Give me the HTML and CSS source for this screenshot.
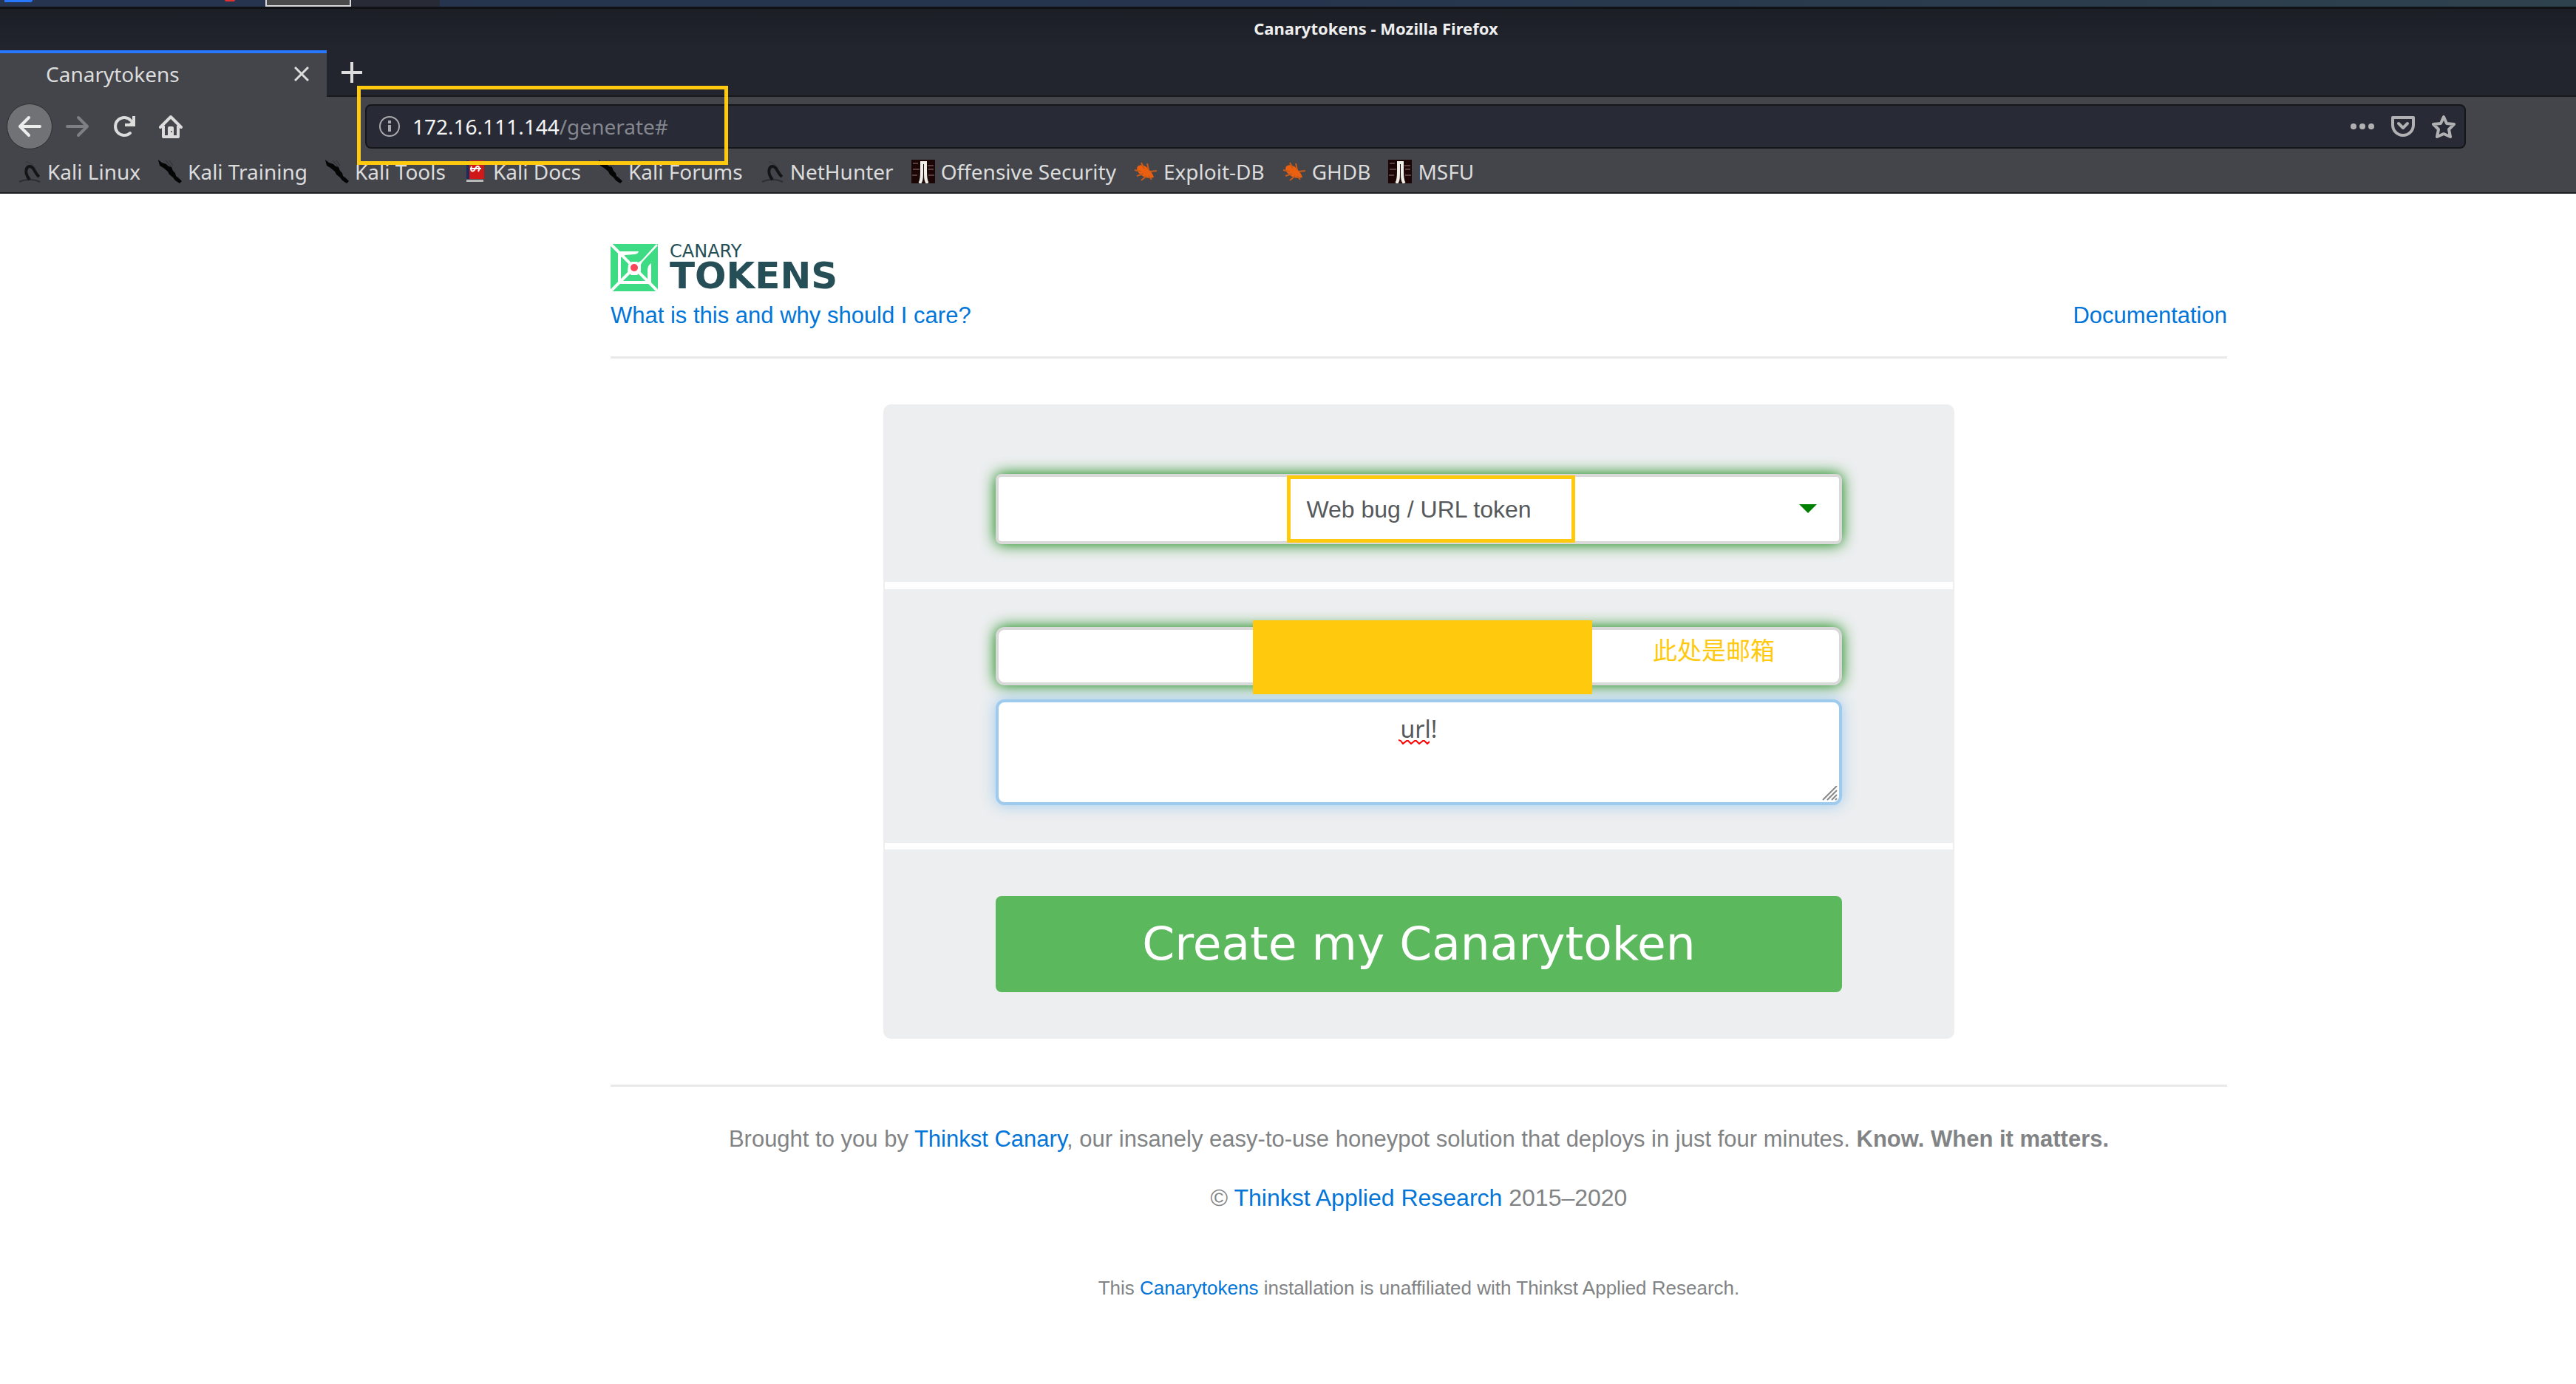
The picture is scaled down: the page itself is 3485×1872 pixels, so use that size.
FILE: index.html
```html
<!DOCTYPE html>
<html lang="en">
<head>
<meta charset="utf-8">
<title>Canarytokens</title>
<link rel="stylesheet" href="styles.css">
</head>
<body>
<svg class="sprite" aria-hidden="true">
  <symbol id="dragon" viewBox="0 0 32 32">
    <path d="M2 30c8-4 20-4 28 0" fill="none" stroke="#2c2e32" stroke-width="2"/>
    <path d="M16 27c-4-5-6-10-4-15 2-4 6-4 9 0 2 3 4 8 8 11" fill="none" stroke="#141517" stroke-width="4"/>
    <path d="M11 3c6 1 10 4 13 9" fill="none" stroke="#34363a" stroke-width="1"/>
  </symbol>
  <symbol id="slash" viewBox="0 0 32 32">
    <path d="M0 0l5 4 6 2 3 3 4 1 2 5 3 3 1 4 4 3 4 4-3 3-6-4-3-4-5-4-2-4-6-5-5-3z" fill="#050505"/>
    <path d="M10 1l8 9M15 1l5 7" stroke="#2c2d31" stroke-width="1"/>
  </symbol>
  <symbol id="docs" viewBox="0 0 32 32">
    <path d="M4 1h24v25H4z" fill="#d01818"/><path d="M4 1h4v25H4z" fill="#1c2a5c"/><path d="M4 27h23v3H4z" fill="#b9b9b9"/>
    <path d="M11 9c-3 8 3 8 5 3 2-5 8-4 4 4M9 12h15" fill="none" stroke="#fff" stroke-width="2"/>
  </symbol>
  <symbol id="offsec" viewBox="0 0 32 32">
    <path d="M0 0h32v32H0z" fill="#1c0505"/>
    <path d="M2 5h7M2 13h9M1 21h7M22 8h8M23 13h7M23 21h8" stroke="#5c3d3d" stroke-width="2"/>
    <path d="M11 32c3-3 3-8 3-17V4h5v11c0 9 0 14 3 17" fill="none" stroke="#f0eee8" stroke-width="4"/>
  </symbol>
  <symbol id="spider" viewBox="0 0 32 32">
    <path d="M5 9c6-4 12 0 16 5 3 3 5 6 6 10-7 2-14 0-18-4-4-3-6-7-4-11z" fill="#ea6010"/>
    <path d="M1 14l9 2M4 22l9-3M10 28l7-6M10 4l4 8M18 5l2 9M31 15l-9 1M24 27l-4-5" stroke="#c85a1a" stroke-width="2"/>
  </symbol>
</svg>

<header class="browser">
  <div class="desktop">
    <span class="desk-logo"></span><span class="desk-dot"></span><span class="desk-task"></span><span class="desk-rest"></span>
  </div>
  <div class="titlebar">Canarytokens - Mozilla Firefox</div>
  <div class="tabs">
    <div class="tab">
      <span class="tab-name">Canarytokens</span>
      <button class="icon-btn" aria-label="Close tab"><svg width="20" height="20" viewBox="0 0 20 20"><path d="M1 1l18 18M19 1L1 19" stroke="#dcdcdc" stroke-width="3" fill="none"/></svg></button>
    </div>
    <button class="icon-btn new-tab" aria-label="New tab"><svg width="28" height="28" viewBox="0 0 28 28"><path d="M14 0v28M0 14h28" stroke="#dcdcdc" stroke-width="4" fill="none"/></svg></button>
  </div>
  <nav class="navbar">
    <button class="icon-btn back" aria-label="Back"><svg width="32" height="32" viewBox="0 0 32 32"><path d="M30 16H3M15 4L3 16l12 12" stroke="#ededed" stroke-width="4" fill="none" stroke-linecap="round" stroke-linejoin="round"/></svg></button>
    <button class="icon-btn" aria-label="Forward"><svg width="32" height="32" viewBox="0 0 32 32"><path d="M2 16h27M17 4l12 12-12 12" stroke="#7d7f84" stroke-width="4" fill="none" stroke-linecap="round" stroke-linejoin="round"/></svg></button>
    <button class="icon-btn" aria-label="Reload"><svg width="32" height="32" viewBox="0 0 32 32"><path d="M24 25a12 12 0 1 1 1-17" stroke="#dcdcdc" stroke-width="4" fill="none" stroke-linecap="round"/><path d="M31 2v14H17v-4h6l4-4V2z" fill="#dcdcdc"/></svg></button>
    <button class="icon-btn" aria-label="Home"><svg width="32" height="32" viewBox="0 0 32 32"><path d="M2 17L16 3l14 14" stroke="#dcdcdc" stroke-width="4" fill="none" stroke-linecap="round" stroke-linejoin="round"/><path d="M6 15v15h20V15" fill="none" stroke="#dcdcdc" stroke-width="4" stroke-linejoin="round"/><path d="M12 18q0-2 2-2h4q2 0 2 2v12h-8z" fill="#dcdcdc"/><circle cx="17" cy="23" r="1" fill="#43454b"/></svg></button>
    <div class="urlbar">
      <svg width="28" height="28" viewBox="0 0 28 28"><circle cx="14" cy="14" r="13" stroke="#a8a9ad" stroke-width="2" fill="none"/><path d="M14 12v9M14 6v4" stroke="#a8a9ad" stroke-width="4"/></svg>
      <span class="url"><b>172.16.111.144</b>/generate#</span>
      <button class="icon-btn" aria-label="Page actions"><svg width="32" height="32" viewBox="0 0 32 32"><g fill="#b1b1b3"><circle cx="4" cy="16" r="4"/><circle cx="16" cy="16" r="4"/><circle cx="28" cy="16" r="4"/></g></svg></button>
      <button class="icon-btn" aria-label="Save to Pocket"><svg width="32" height="32" viewBox="0 0 32 32"><path d="M2 4h28v10a14 14 0 0 1-28 0z" stroke="#b1b1b3" stroke-width="4" fill="none" stroke-linejoin="round"/><path d="M10 12l6 6 6-6" stroke="#b1b1b3" stroke-width="4" fill="none" stroke-linecap="round" stroke-linejoin="round"/></svg></button>
      <button class="icon-btn" aria-label="Bookmark this page"><svg width="32" height="32" viewBox="0 0 32 32"><path d="M16 3l4 9 10 1-7 7 2 10-9-4-9 4 2-10-7-7 10-1z" stroke="#b1b1b3" stroke-width="4" fill="none" stroke-linejoin="round"/></svg></button>
    </div>
    <span class="mark mark-url"></span>
  </nav>
  <nav class="bookmarks">
    <a href="#"><svg class="fav"><use href="#dragon"/></svg>Kali Linux</a>
    <a href="#"><svg class="fav"><use href="#slash"/></svg>Kali Training</a>
    <a href="#"><svg class="fav"><use href="#slash"/></svg>Kali Tools</a>
    <a href="#"><svg class="fav"><use href="#docs"/></svg>Kali Docs</a>
    <a href="#"><svg class="fav"><use href="#slash"/></svg>Kali Forums</a>
    <a href="#"><svg class="fav"><use href="#dragon"/></svg>NetHunter</a>
    <a href="#"><svg class="fav"><use href="#offsec"/></svg>Offensive Security</a>
    <a href="#"><svg class="fav"><use href="#spider"/></svg>Exploit-DB</a>
    <a href="#"><svg class="fav"><use href="#spider"/></svg>GHDB</a>
    <a href="#"><svg class="fav"><use href="#offsec"/></svg>MSFU</a>
  </nav>
</header>

<main class="page">
  <header class="masthead">
    <div class="brand">
      <svg width="64" height="64" viewBox="0 0 64 64">
        <path d="M0 0h64v64H0z" fill="#3ddc84"/>
        <path d="M0 0l64 64M0 64l32-32" stroke="#fff" stroke-width="4"/>
        <path d="M62 0l2 2-19 20q-5 5-5 12l-8 2v-10q7 0 12-6z" fill="#fff"/>
        <path d="M10 10h28q-1 4-6 4l-12 1-6 3v34h-4z" fill="#fff"/>
        <path d="M10 50h44v4H10z" fill="#fff"/>
        <path d="M55 26v26h-5V36q0-7 5-10z" fill="#fff"/>
        <path d="M24 28l5-4h7l5 5v8l-5 5h-8l-5-5z" fill="#fff"/>
        <circle cx="32" cy="32" r="5" fill="#fa4659"/>
      </svg>
      <div class="wordmark"><span class="word-top">CANARY</span><span class="word-main">TOKENS</span></div>
    </div>
    <div class="links"><a href="#">What is this and why should I care?</a><a href="#">Documentation</a></div>
  </header>

  <form class="card">
    <section class="panel panel-type">
      <div class="field">
        <select class="input token-type" aria-label="Token type"><option>Web bug / URL token</option></select>
        <svg class="caret" width="24" height="12" viewBox="0 0 24 12"><path d="M0 0h24L12 12z" fill="#008000"/></svg>
        <span class="mark mark-type"></span>
      </div>
    </section>
    <section class="panel panel-details">
      <div class="field">
        <input class="input email" type="text" aria-label="Email address">
        <span class="redaction"></span>
        <span class="note">此处是邮箱</span>
      </div>
      <div class="field">
        <textarea class="input memo" aria-label="Reminder note" spellcheck="false">url!</textarea>
        <svg class="squiggle" width="42" height="7" viewBox="0 0 42 7"><path d="M0 1l3 1 3 4 5-4 2 0 4 4 5-4 2 0 4 4 5-4 2 0 4 4 3-3" stroke="#f00" stroke-width="2" fill="none"/></svg>
        <svg class="grip" width="22" height="20" viewBox="0 0 22 20"><path d="M1 19L20 0M7 19L20 6M13 19l7-7M18 19l2-2" stroke="#888" stroke-width="2"/></svg>
      </div>
    </section>
    <section class="panel panel-submit">
      <button class="submit" type="button">Create my Canarytoken</button>
    </section>
  </form>

  <footer class="footer">
    <p>Brought to you by <a href="#">Thinkst Canary</a>, our insanely easy-to-use honeypot solution that deploys in just four minutes. <strong>Know. When it matters.</strong></p>
    <p class="copyright">© <a href="#">Thinkst Applied Research</a> 2015–2020</p>
    <p class="fine">This <a href="#">Canarytokens</a> installation is unaffiliated with Thinkst Applied Research.</p>
  </footer>
</main>
</body>
</html>
```
FILE: styles.css
```css
* { box-sizing: border-box; }
body {
  margin: 0;
  background: #fff;
  font: 31px/48px "Liberation Sans", Arial, sans-serif;
  color: #55595c;
  overflow-x: hidden;
}
a { color: #0275d8; text-decoration: none; }
button, input, select, textarea { font: inherit; color: inherit; }
.sprite { position: absolute; width: 0; height: 0; }

/* browser chrome */
.browser {
  font: 28px/40px "Noto Sans", sans-serif;
  color: #dcdcdc;
  background: #43454b;
  border-bottom: 2px solid #1b1c1f;
}
.desktop {
  display: flex;
  height: 12px;
  background: linear-gradient(90deg, #26344f, #26354d 50%, #2e424d);
  border-bottom: 3px solid #111216;
}
.desk-logo { width: 38px; margin-left: 6px; height: 3px; background: #2777ff; border-radius: 0 0 8px 2px; }
.desk-dot { width: 14px; height: 2px; margin-left: 260px; background: #e03030; border-radius: 0 0 6px 6px; }
.desk-task { width: 116px; margin-left: 41px; background: #4a4a4a; border: 2px solid #d8d8d8; border-top: 0; }
.desk-rest { width: 120px; background: #282a36; }
.titlebar {
  height: 56px;
  padding: 6px 0 0 238px;
  text-align: center;
  font-size: 22px;
  font-weight: bold;
  color: #eee;
  background: linear-gradient(#1c1e26, #23252e);
}
.tabs { display: flex; height: 63px; background: #23252e; border-bottom: 2px solid #18191d; }
.tab {
  display: flex;
  align-items: center;
  justify-content: space-between;
  width: 442px;
  height: 63px;
  padding: 0 24px 4px 62px;
  background: #43454b;
  border-top: 4px solid #2777ff;
}
.icon-btn { display: flex; padding: 0; border: 0; background: none; align-items: center; justify-content: center; }
.new-tab { margin: 0 20px; padding-bottom: 2px; }
.navbar { position: relative; display: flex; align-items: center; gap: 31px; height: 79px; padding: 0 149px 0 9px; }
.back { width: 62px; height: 62px; margin-right: -13px; border-radius: 50%; background: #717276; border: 1px solid #2c2d31; }
.urlbar {
  display: flex;
  flex: 1;
  align-items: center;
  height: 60px;
  margin-left: 216px;
  padding: 0 12px 0 17px;
  gap: 23px;
  background: #282a36;
  border: 2px solid #15161a;
  border-radius: 8px;
}
.url { flex: 1; margin-left: -6px; color: #85878f; }
.url b { font-weight: normal; color: #f4f4f4; }
.mark { position: absolute; border: 5px solid #ffc90e; pointer-events: none; }
.mark-url { left: 483px; top: -15px; width: 502px; height: 107px; z-index: 1; }
.bookmarks { display: flex; height: 50px; padding: 1px 0 0 24px; gap: 24px; }
.bookmarks a { display: flex; align-items: center; gap: 8px; color: #dcdcdc; white-space: nowrap; height: 42px; }
.fav { width: 32px; height: 32px; }

/* canarytokens page */
.page { padding: 68px 472px 80px 826px; }
.masthead { border-bottom: 3px solid #e9e9e9; padding-bottom: 31px; }
.brand { display: flex; gap: 16px; height: 64px; }
.wordmark { display: flex; flex-direction: column; font-family: "DejaVu Sans", sans-serif; color: #254e56; }
.word-top { font-size: 24px; line-height: 20px; }
.word-main { font-size: 50px; line-height: 46px; font-weight: bold; }
.links { display: flex; justify-content: space-between; margin-top: 9px; }

.card {
  width: 1449px;
  max-width: 100%;
  margin: 62px auto 0;
  background: #eceeef;
  border-radius: 10px;
}
.panel { margin: 0 2px; padding: 0 150px; }
.panel-type { padding-top: 94px; padding-bottom: 51px; }
.panel-details { display: grid; gap: 19px; padding-top: 51px; padding-bottom: 51px; border-top: 10px solid #fff; border-bottom: 9px solid #fff; }
.panel-submit { padding-top: 63px; padding-bottom: 63px; }
.field { position: relative; display: flex; }
.input {
  width: 100%;
  background: #fff;
  border: 4px solid #d9d9d9;
  border-radius: 12px;
  box-shadow: 0 0 20px green;
  text-align: center;
  outline: 0;
}
.token-type { appearance: none; height: 95px; text-align-last: center; font-size: 32px; border-radius: 8px; }
.email { height: 79px; }
.memo {
  height: 143px;
  padding: 12px 24px;
  resize: none;
  font-family: "Noto Sans", sans-serif;
  font-size: 32px;
  border-color: #9ecaed;
  box-shadow: 0 0 20px #9ecaed;
}
.caret { position: absolute; right: 34px; top: 41px; }
.mark-type { left: 394px; top: 2px; width: 390px; height: 91px; }
.redaction { position: absolute; left: 348px; top: -9px; width: 459px; height: 100px; background: #ffc90e; z-index: 1; }
.note { position: absolute; left: 889px; top: 6px; font: 33px/48px "Noto Sans CJK SC", sans-serif; color: #ffc90e; }
.squiggle { position: absolute; left: 545px; top: 54px; }
.grip { position: absolute; right: 5px; bottom: 6px; }
.submit {
  width: 100%;
  height: 130px;
  border: 0;
  border-radius: 8px;
  background: #5cb85c;
  color: #fff;
  font: 63px/80px "DejaVu Sans", sans-serif;
}

.footer { margin-top: 62px; padding-top: 47px; border-top: 3px solid #e9e9e9; text-align: center; color: #818385; }
.footer p { margin: 0 0 31px; }
.footer .copyright { font-size: 32px; }
.footer .fine { margin-top: 74px; font-size: 26px; }
```
